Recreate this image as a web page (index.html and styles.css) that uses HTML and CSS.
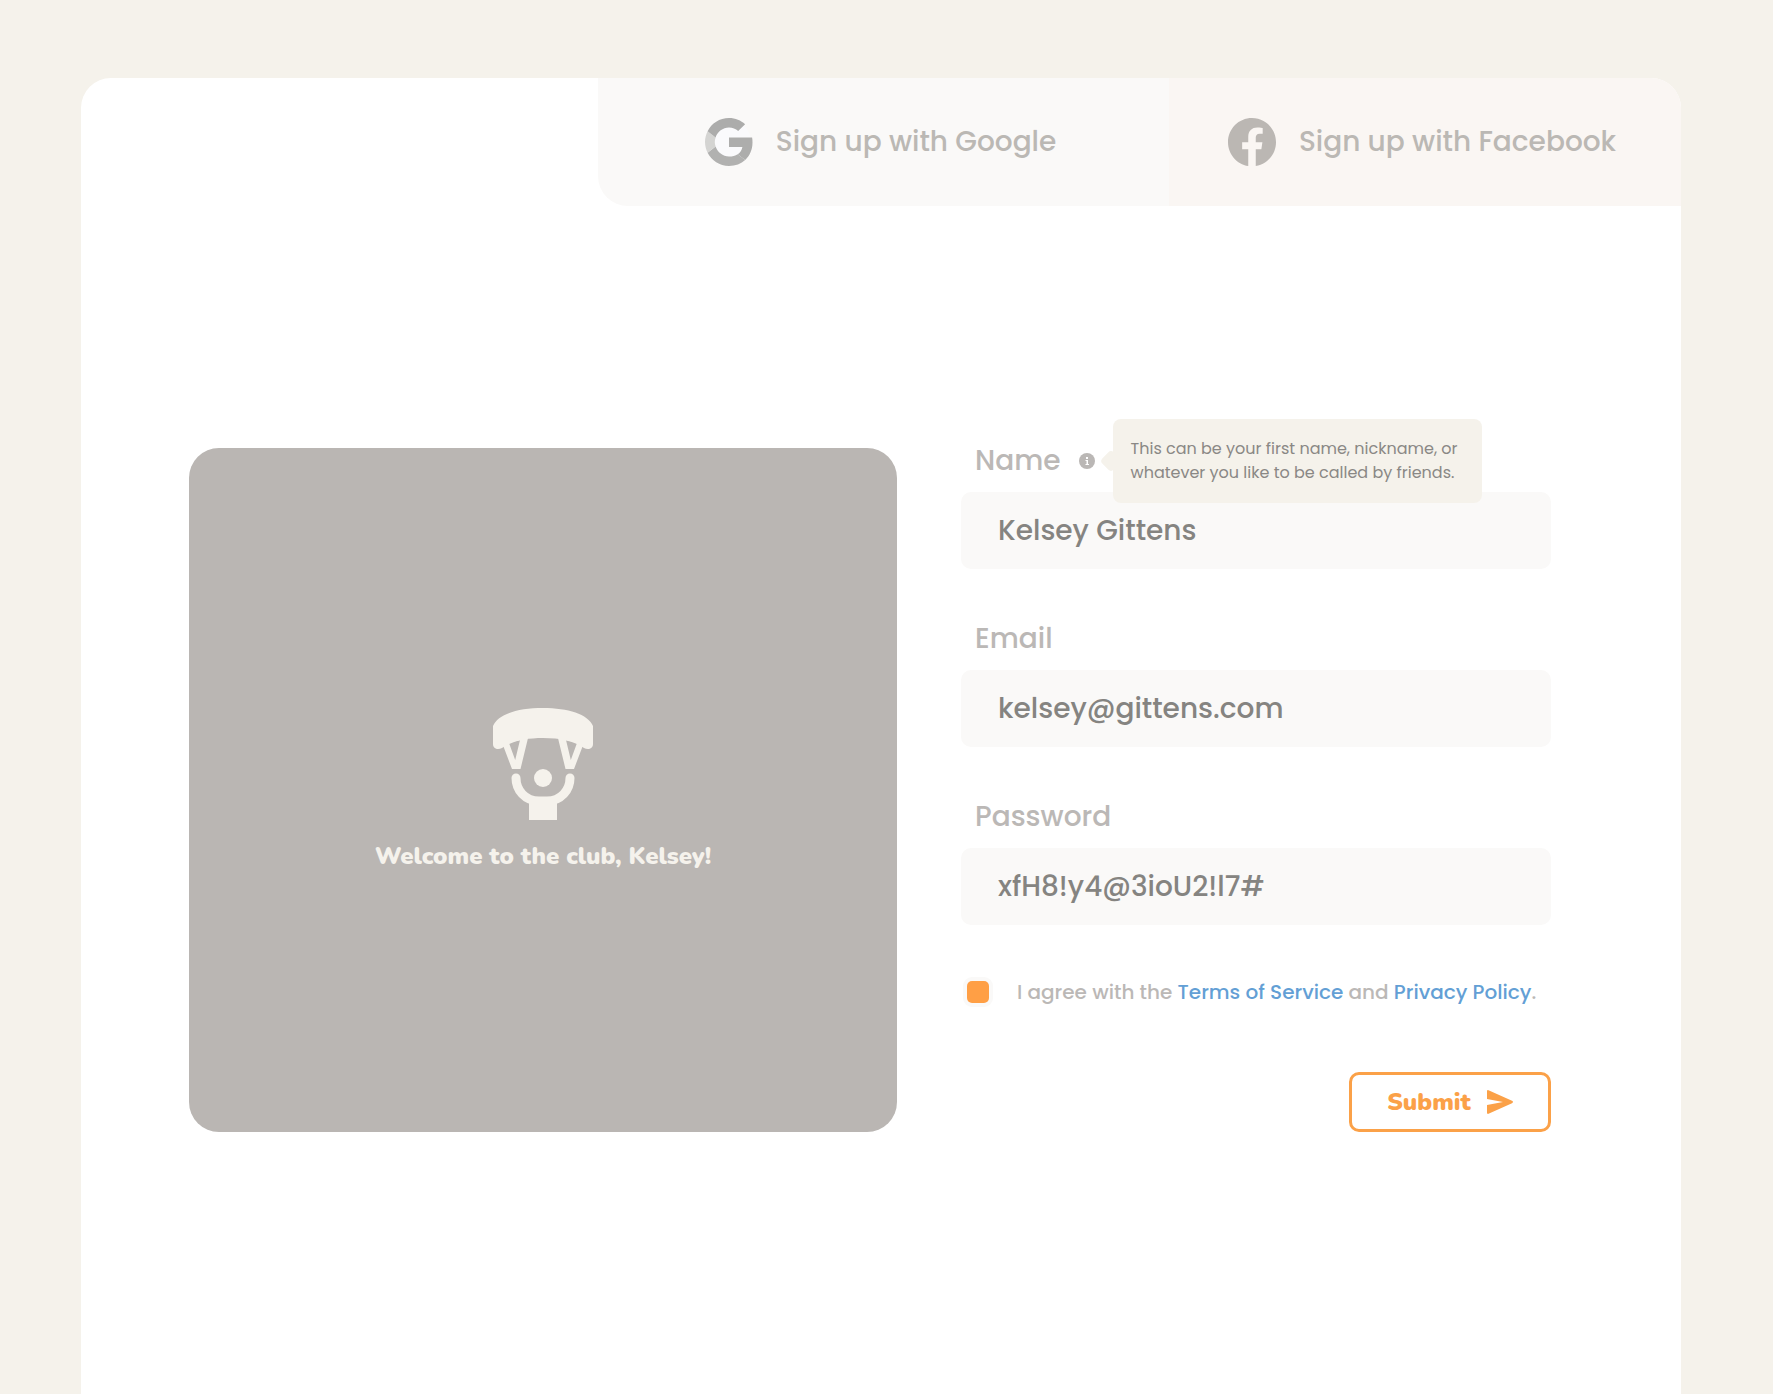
FILE: index.html
```html
<!DOCTYPE html>
<html lang="en">
<head>
<meta charset="utf-8">
<meta name="viewport" content="width=device-width, initial-scale=1">
<title>Sign up</title>
<link rel="stylesheet" href="styles.css">
</head>
<body>
<div class="card">
  <header class="social">
    <button type="button" class="social-btn google">
      <svg class="social-icon" viewBox="0 0 48 48" aria-hidden="true">
        <circle cx="24" cy="24" r="22" fill="#fafafc"/>
        <path fill="#adadac" d="M24 19.6h23.1c.3 1.500.4 3.100.4 4.900 0 7.200-2.700 13.300-7.300 17.500l-7.500-5.800c2.500-1.700 4.100-4.200 4.700-7.300H24z"/>
        <path fill="#b1b1b0" d="M40.200 42C36.100 45.900 30.500 48 24 48 14.600 48 6.500 42.600 2.600 34.800l8-6.200C12.500 34.300 17.800 38.500 24 38.500c3.400 0 6.400-.8 8.700-2.300z"/>
        <path fill="#d4d4d2" d="M2.600 34.800C1 31.500 0 27.900 0 24s1-7.500 2.600-10.800l8 6.200c-.5 1.400-.8 3-.8 4.600s.3 3.200.8 4.600z"/>
        <path fill="#acacab" d="M24 9.500c3.500 0 6.700 1.200 9.200 3.600l6.900-6.900C35.900 2.400 30.500 0 24 0 14.600 0 6.500 5.400 2.600 13.200l8 6.200C12.500 13.700 17.800 9.500 24 9.500z"/>
      </svg>
      Sign up with Google
    </button>
    <button type="button" class="social-btn facebook">
      <svg class="social-icon" viewBox="0 0 24 24" aria-hidden="true">
        <path fill="#bbb7b3" d="M24 12.073C24 5.405 18.627 0 12 0S0 5.405 0 12.073C0 18.100 4.388 23.094 10.125 24v-8.437H7.078v-3.490h3.047v-2.660c0-3.025 1.792-4.697 4.533-4.697 1.312 0 2.686.236 2.686.236v2.971h-1.513c-1.491 0-1.956.931-1.956 1.886v2.264h3.328l-.532 3.490h-2.796V24C19.612 23.094 24 18.100 24 12.073z"/>
      </svg>
      Sign up with Facebook
    </button>
  </header>

  <main class="content">
    <section class="welcome">
      <svg class="logo" viewBox="0 0 100 112" aria-hidden="true">
        <path fill="#f5f2ec" d="M0 18C5 6 25 0 50 0s45 6 50 18v18c0 5-5 6-9 4-10-7-24-10-41-10S19 33 9 40c-4 2-9 1-9-4z"/>
        <path fill="#f5f2ec" fill-rule="evenodd" d="M8 32l11 29h8.500L36 26zM16 35l6.200 17L27 32zM92 32L81 61h-8.500L64 26zM84 35l-6.200 17L73 32z"/>
        <circle cx="50" cy="70" r="9" fill="#f5f2ec"/>
        <path fill="none" stroke="#f5f2ec" stroke-width="9" stroke-linecap="round" d="M23 70c0 12 9 23 23 23h8c14 0 23-11 23-23"/>
        <path fill="#f5f2ec" d="M36 90h28v22H36z"/>
      </svg>
      <h1 class="welcome-text">Welcome to the club, Kelsey!</h1>
    </section>

    <form class="form">
      <div class="field">
        <div class="label-row">
          <label for="name">Name</label>
          <span class="hint">
            <svg class="hint-icon" viewBox="0 0 16 16" aria-hidden="true">
              <circle cx="8" cy="8" r="8" fill="#bab7b5"/>
              <path fill="#fff" d="M7 4h2v2H7zM6.500 7H9v4h1v1H6.500v-1h1V8h-1z"/>
            </svg>
            <span class="tooltip" role="tooltip">This can be your first name, nickname, or<br>whatever you like to be called by friends.</span>
          </span>
        </div>
        <input id="name" type="text" value="Kelsey Gittens">
      </div>
      <div class="field">
        <label for="email">Email</label>
        <input id="email" type="email" value="kelsey@gittens.com">
      </div>
      <div class="field">
        <label for="password">Password</label>
        <input id="password" type="text" value="xfH8!y4@3ioU2!l7#">
      </div>
      <div class="agree">
        <input id="agree" type="checkbox" checked>
        <label for="agree">I agree with the <a href="#terms">Terms of Service</a> and <a href="#privacy">Privacy Policy</a>.</label>
      </div>
      <button type="submit" class="submit">
        Submit
        <svg class="send" viewBox="0 0 26 26" aria-hidden="true">
          <path fill="#fba148" d="M1.500 1.200L25 11.800q2 1.200 0 2.400L1.500 24.800Q0 25.300 0 23.800V16l16-3L0 10V2.200Q0 .7 1.500 1.200z"/>
        </svg>
      </button>
    </form>
  </main>
</div>
</body>
</html>
```
FILE: styles.css
```css
* {
  box-sizing: border-box;
}

body {
  margin: 0;
  padding: 78px 92px 0 81px;
  background: #f5f2eb;
  font-family: Poppins, Inter, sans-serif;
  font-weight: 500;
}

button,
input {
  font: inherit;
}

.card {
  min-height: calc(100vh - 78px);
  background: #fff;
  border-radius: 30px 30px 0 0;
  overflow: hidden;
}

.social {
  display: grid;
  grid-template-columns: 517fr 571fr 512fr;
}

.social-btn {
  display: flex;
  align-items: center;
  justify-content: center;
  gap: 23px;
  height: 128px;
  padding: 0 6px 0 0;
  border: 0;
  font-size: 28px;
  color: #bbb8b4;
  white-space: nowrap;
}

.google {
  grid-column: 2;
  background: #faf9f8;
  border-bottom-left-radius: 30px;
}

.facebook {
  background: #faf6f3;
}

.social-icon {
  width: 48px;
  height: 48px;
  flex: none;
}

.content {
  display: grid;
  grid-template-columns: 708fr 590fr;
  gap: 64px;
  padding: 242px 130px 80px 108px;
}

.welcome {
  display: flex;
  flex-direction: column;
  align-items: center;
  justify-content: center;
  gap: 20px;
  min-height: 684px;
  background: #bab6b3;
  border-radius: 30px;
}

.logo {
  width: 100px;
  height: 112px;
}

.welcome-text {
  margin: 0;
  font: 900 24px/32px Nunito, "Open Sans", sans-serif;
  color: #f5f2ec;
}

.form {
  display: flex;
  flex-direction: column;
  gap: 57px;
}

.field {
  display: flex;
  flex-direction: column;
  gap: 18px;
  font-size: 28px;
}

.field label {
  padding-left: 14px;
  line-height: 26px;
  color: #bbb8b6;
}

.field .label-row {
  display: flex;
  align-items: center;
  gap: 18px;
}

.hint {
  position: relative;
  display: flex;
}

.hint-icon {
  width: 16px;
  height: 16px;
}

.tooltip {
  position: absolute;
  left: 34px;
  top: 50%;
  transform: translateY(-50%);
  padding: 18px 24px 18px 18px;
  border-radius: 8px;
  background: #f5f2eb;
  font-size: 16px;
  font-weight: 400;
  line-height: 24px;
  color: #8a8885;
  white-space: nowrap;
}

.tooltip::before {
  content: "";
  position: absolute;
  left: -10px;
  top: 50%;
  width: 16px;
  height: 16px;
  background: #f5f2eb;
  border-radius: 4px;
  transform: translateY(-50%) rotate(45deg);
}

.field input {
  width: 100%;
  height: 77px;
  padding: 0 37px;
  border: 0;
  border-radius: 10px;
  background: #faf9f8;
  color: #858481;
}

.agree {
  display: flex;
  align-items: center;
  gap: 28px;
  height: 20px;
  padding-left: 6px;
  font-size: 20px;
  line-height: 28px;
  color: #bbb8b6;
  white-space: nowrap;
}

.agree input {
  appearance: none;
  flex: none;
  width: 22px;
  height: 22px;
  margin: 0;
  border-radius: 5px;
  background: #ff9f45;
  box-shadow: 0 0 0 4px #faf9f8;
}

.agree a {
  color: #639fd5;
  text-decoration: none;
}

.submit {
  display: flex;
  align-items: center;
  justify-content: center;
  gap: 16px;
  width: 202px;
  height: 60px;
  margin-top: auto;
  align-self: flex-end;
  padding: 0;
  border: 3px solid #fba148;
  border-radius: 10px;
  background: #fff;
  color: #fba148;
  font: 900 24px/32px Nunito, "Open Sans", sans-serif;
}

.send {
  width: 26px;
  height: 26px;
}
```
